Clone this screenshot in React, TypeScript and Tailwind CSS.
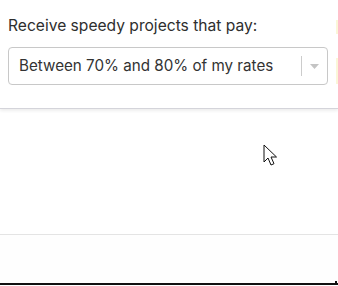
export default function App() {
  return (
    <div className="relative flex h-[286px] w-[338px] flex-col overflow-hidden bg-white font-['Inter','Noto_Sans',sans-serif]">
      {/* settings panel */}
      <div className="relative z-10 flex h-[109px] shrink-0 border-b border-[#d4d4da] bg-white shadow-[0_2px_3px_rgba(0,0,0,0.07)]">
        <div className="flex-1 pl-2 pt-[16px]">
          <p className="text-[15.6px] leading-[20px] text-[#2e2e2e]">Receive speedy projects that pay:</p>
          <div className="mt-[11px] flex h-[38px] w-[320px] items-center rounded-[4px] border border-[#c8c8c8] bg-white">
            <span className="flex-1 pl-[10px] text-[15.2px] text-[#333]">Between 70% and 80% of my rates</span>
            <span className="h-[20px] w-px bg-[#cccccc]" />
            <span className="flex w-[25px] justify-center">
              <svg width="9" height="5" viewBox="0 0 9 5">
                <path d="M0 0h9L4.5 5z" fill="#c4c4c4" />
              </svg>
            </span>
          </div>
        </div>
        {/* clipped neighbour column */}
        <div className="flex w-[2px] flex-col pt-[20px]">
          <span className="h-[14px] bg-[#fbf6d8]" />
          <span className="mt-[24px] h-[26px] bg-[#fbf6d8]" />
        </div>
      </div>

      {/* empty body */}
      <div className="h-[126px] shrink-0 border-b border-[#e4e4e4] bg-white" />
      <div className="flex h-[50px] shrink-0 items-end justify-end border-b-2 border-[#111] bg-[#fefefe] pr-[1px]">
        <span className="h-[2px] w-[2px] bg-[#111]" />
      </div>

      {/* mouse pointer */}
      <svg className="absolute left-[263px] top-[144px] z-20" width="14" height="24" viewBox="0 0 14 24">
        <path
          d="M1 1v17l4-4 3 7 3-1.3-3-6.7h5.5z"
          fill="white"
          stroke="#111"
          strokeWidth="1"
          strokeLinejoin="miter"
        />
      </svg>
    </div>
  );
}
